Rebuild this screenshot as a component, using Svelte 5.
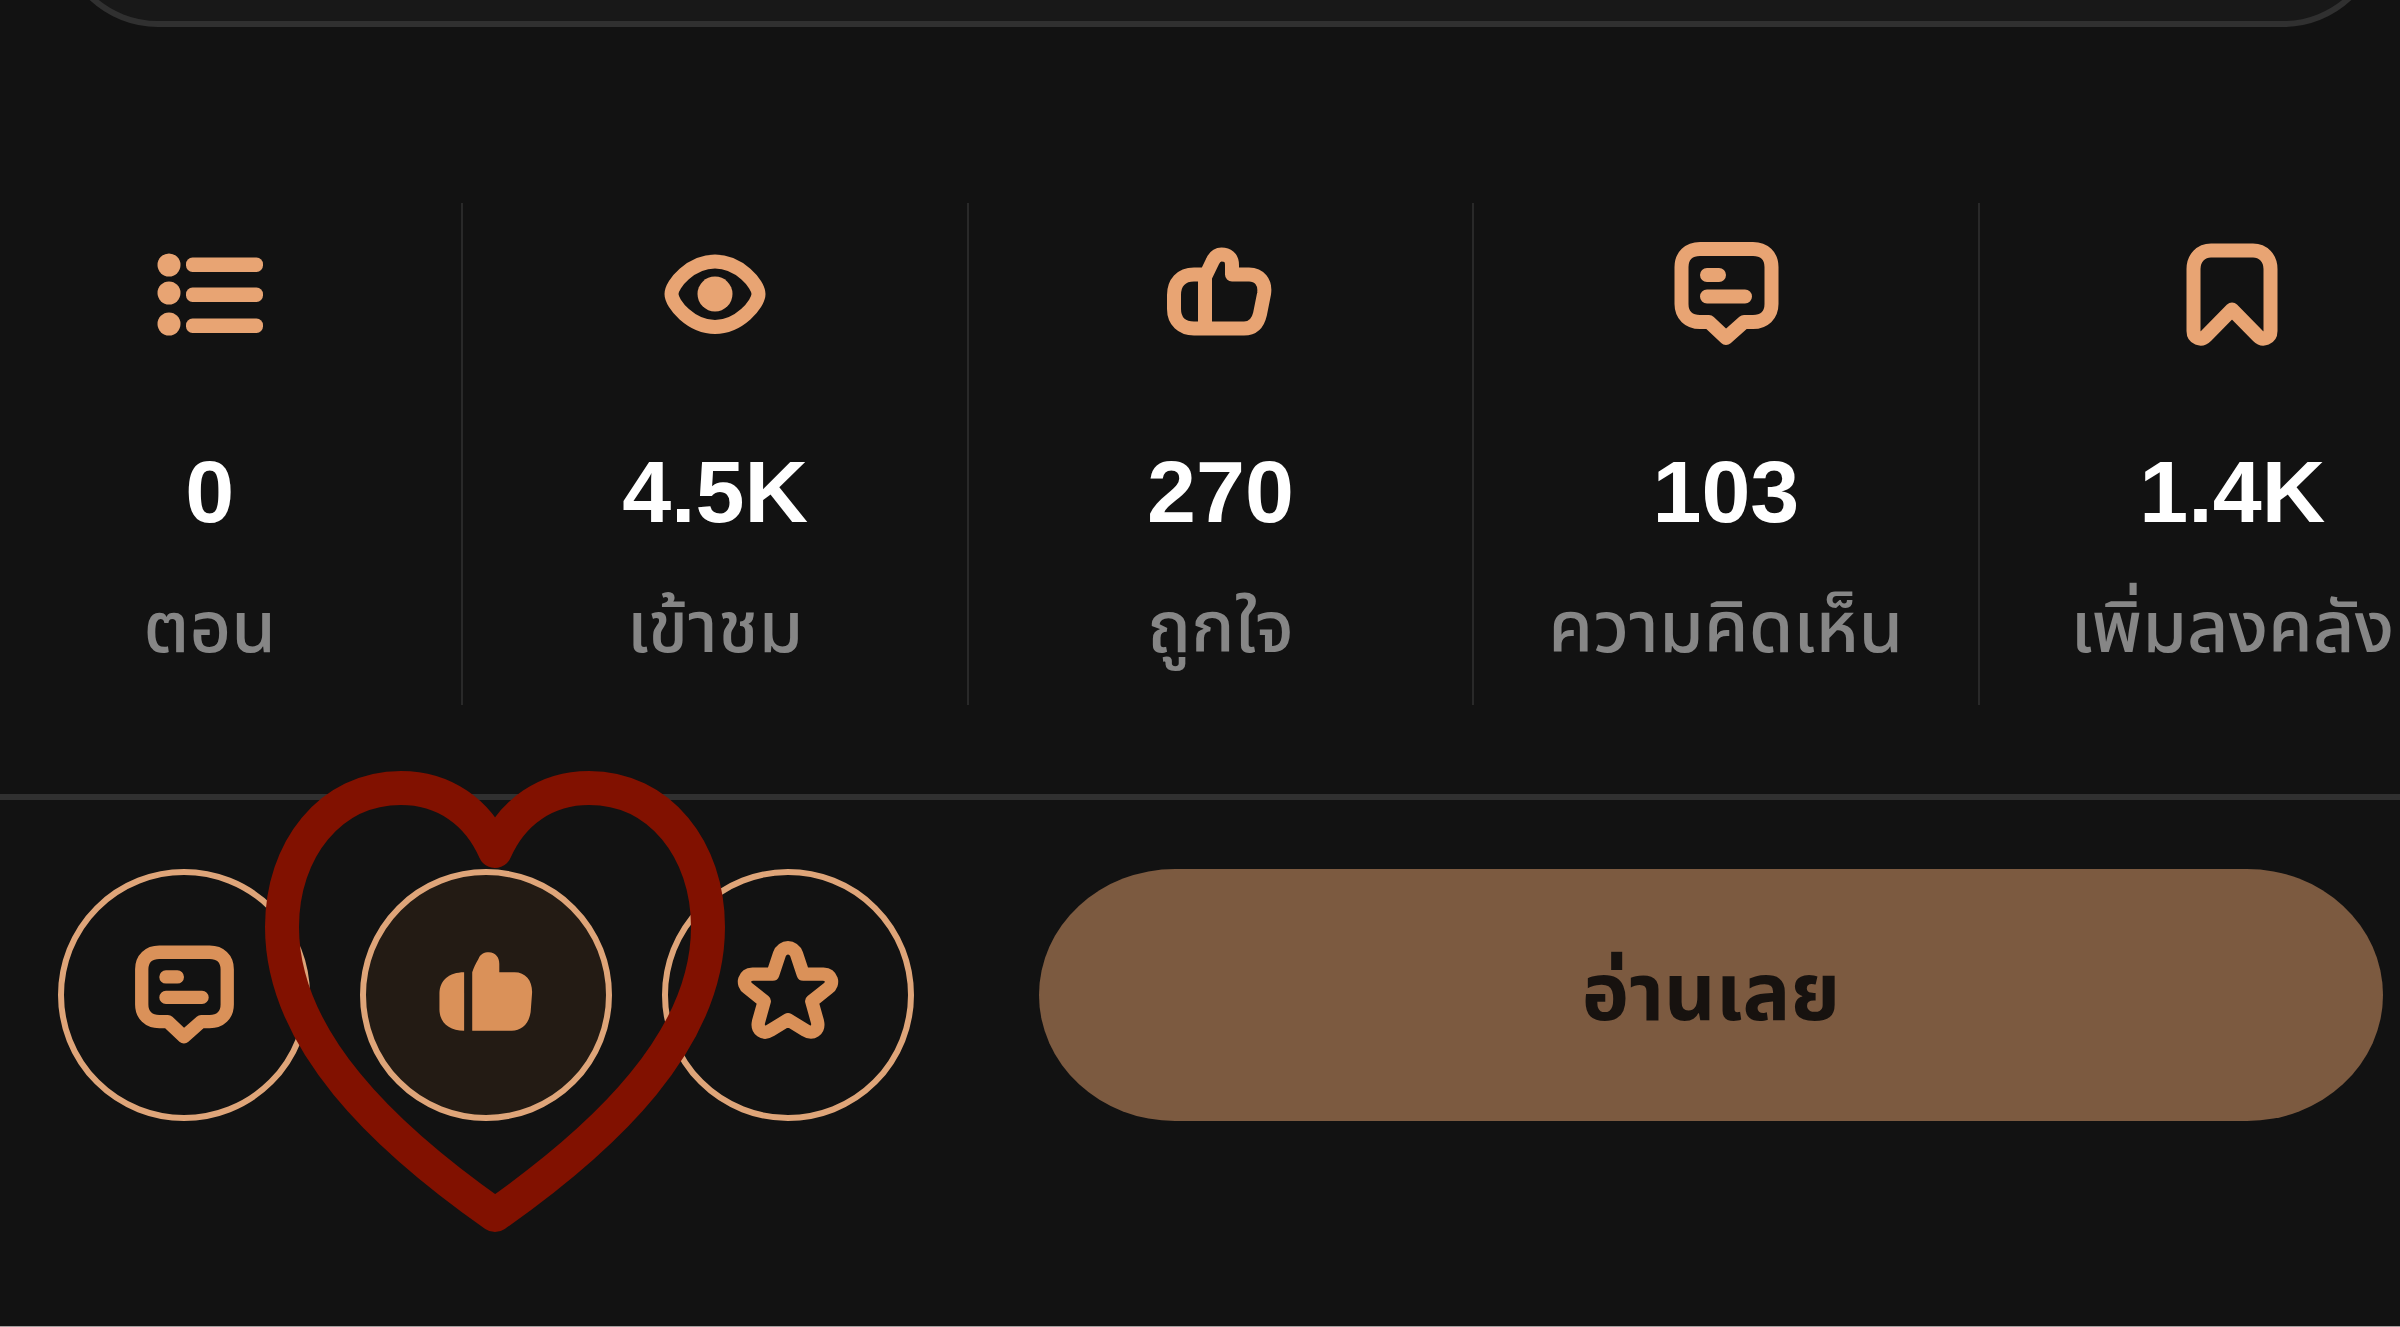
<script lang="ts">
  type IconName = 'list' | 'eye' | 'like' | 'comment' | 'bookmark' | 'likeFilled' | 'star'

  interface Stat {
    icon: IconName
    value: string
    label: string
  }

  const stats: Stat[] = [
    { icon: 'list', value: '0', label: 'ตอน' },
    { icon: 'eye', value: '4.5K', label: 'เข้าชม' },
    { icon: 'like', value: '270', label: 'ถูกใจ' },
    { icon: 'comment', value: '103', label: 'ความคิดเห็น' },
    { icon: 'bookmark', value: '1.4K', label: 'เพิ่มลงคลัง' },
  ]

  let liked = $state(true)
</script>

{#snippet icon(name: IconName)}
  <svg class="icon" viewBox="0 0 120 120" aria-hidden="true">
    {#if name === 'list'}
      <g class="solid">
        <circle cx="19" cy="31" r="11.5" />
        <circle cx="19" cy="59" r="11.5" />
        <circle cx="19" cy="90" r="11.5" />
        <rect x="36" y="23.5" width="77" height="14.5" rx="6.5" />
        <rect x="36" y="53.5" width="77" height="14.5" rx="6.5" />
        <rect x="36" y="84.5" width="77" height="14.5" rx="6.5" />
      </g>
    {:else if name === 'eye'}
      <path d="M16.5 60C16.5 50 36 27.5 60 27.5S103.5 50 103.5 60S84 93 60 93S16.5 70 16.5 60Z" />
      <circle class="solid" cx="60" cy="60" r="17.5" />
    {:else if name === 'like'}
      <path d="M45 40.5H34C21 40.5 14 49 14 61V75C14 87 22 94.5 34 94.5H84C93 94.5 98 89 100 80L104 60C106 48 99 40.5 89 40.5H72V31C72 23 67 20.5 61.5 20.5C57 20.5 54.5 23 52.5 27.5L45 43V94.5" />
    {:else if name === 'comment'}
      <path d="M34 15H87C98 15 105.5 22 105.5 33V70C105.5 81 98 88 87 88H78L60 104L43 88H34C23 88 15.5 81 15.5 70V33C15.5 22 23 15 34 15Z" />
      <path d="M41 41H53M41 62.5H79" />
    {:else if name === 'bookmark'}
      <path d="M21.5 97V35C21.5 24 29 16.5 39 16.5H81C91 16.5 98.5 24 98.5 35V97C98.5 104 91 107 86 102L60 75.5L34 102C29 107 21.5 104 21.5 97Z" />
    {:else if name === 'likeFilled'}
      <g class="solid">
        <path d="M37 36V97.5C21 97.5 11 89 11 75V58C11 45 21 36 37 36Z" />
        <path d="M45.5 97.5V36C47 31 49 27 52 22C54 17 58 15 63 15C70 15.5 74 20 74 27V36H90C102 36 109 45 108.5 58L107 78C105 91 97 97.5 87 97.5Z" />
      </g>
    {:else}
      <path d="M51 17C54 8 66 8 69 17L76 38L97 38C106 38.5 109 48 102 53L85 66.5L91 88C93 97 86 102 78 97L60 86L42 97C34 102 27 97 29 88L35 66.5L18 53C11 48 14 38.5 23 38L44 38Z" />
    {/if}
  </svg>
{/snippet}

<main class="page">
  <div class="card"></div>

  <ul class="stats">
    {#each stats as stat (stat.label)}
      <li>
        {@render icon(stat.icon)}
        <strong>{stat.value}</strong>
        <span>{stat.label}</span>
      </li>
    {/each}
  </ul>

  <footer class="actions">
    <button class="round" aria-label="ความคิดเห็น">{@render icon('comment')}</button>
    <div class="marked">
      <button
        class="round"
        class:round--active={liked}
        aria-label="ถูกใจ"
        aria-pressed={liked}
        onclick={() => (liked = !liked)}
      >
        {@render icon(liked ? 'likeFilled' : 'like')}
      </button>
      <svg class="heart" viewBox="264 770 462 464" aria-hidden="true">
        <path d="M495 851C478 812 444 788 401 788C330 788 282 850 282 927C282 1040 384 1137 495 1215C606 1137 708 1040 708 927C708 850 660 788 589 788C546 788 512 812 495 851Z" />
      </svg>
    </div>
    <button class="round" aria-label="เพิ่มลงคลัง">{@render icon('star')}</button>
    <button class="read">อ่านเลย</button>
  </footer>
</main>

<style>
  :global(body) {
    margin: 0;
    background: #121212;
  }

  .page {
    box-sizing: border-box;
    min-height: 100vh;
    overflow: hidden;
    border-bottom: 1px solid #a39d9d;
    background: #121212;
    color: #fff;
    font-family: 'Liberation Sans', 'Noto Sans Thai', 'Noto Sans', sans-serif;
  }

  /* only the lower edge of the card shows above the stats */
  .card {
    box-sizing: border-box;
    height: 240px;
    margin: -213px 17px 176px 58px;
    border: 6px solid #303030;
    border-radius: 100px;
    background: #181818;
  }

  /* the strip runs a little past both sides of the screen */
  .stats {
    display: grid;
    grid-template-columns: repeat(5, 1fr);
    margin: 0 -85px 89px -42px;
    padding: 0;
    list-style: none;
  }

  .stats li {
    display: flex;
    flex-direction: column;
    align-items: center;
    box-sizing: border-box;
    height: 502px;
    padding-top: 31px;
    border-right: 2px solid #292929;
    color: #e8a473;
  }

  .stats li:last-child {
    border-right: none;
  }

  .stats strong {
    margin-top: 88px;
    color: #fff;
    font-size: 88px;
    line-height: 100px;
  }

  .stats span {
    margin-top: 35px;
    color: #868686;
    font-size: 72px;
    font-weight: 500;
    line-height: 100px;
    white-space: nowrap;
  }

  .icon {
    display: block;
    width: 120px;
    height: 120px;
    fill: none;
    stroke: currentColor;
    stroke-width: 14;
    stroke-linecap: round;
    stroke-linejoin: round;
  }

  .icon .solid {
    fill: currentColor;
    stroke: none;
  }

  .actions {
    display: flex;
    align-items: center;
    gap: 50px;
    padding: 69px 17px 0 58px;
    border-top: 6px solid #303030;
  }

  button {
    padding: 0;
    font-family: inherit;
    cursor: pointer;
  }

  .round {
    display: flex;
    flex: none;
    align-items: center;
    justify-content: center;
    box-sizing: border-box;
    width: 252px;
    height: 252px;
    border: 6px solid #dfa579;
    border-radius: 50%;
    background: none;
    color: #da9159;
  }

  .round .icon {
    width: 114px;
    height: 114px;
  }

  .round--active {
    background: #231b14;
  }

  .marked {
    position: relative;
    z-index: 1;
    flex: none;
  }

  .heart {
    position: absolute;
    top: -99px;
    left: -96px;
    width: 462px;
    height: 464px;
    fill: none;
    stroke: #811100;
    stroke-width: 34;
    stroke-linejoin: round;
    pointer-events: none;
  }

  .read {
    flex: 1;
    height: 252px;
    margin-left: 75px;
    border: none;
    border-radius: 136px / 126px;
    background: #7c5a40;
    color: #17120f;
    font-size: 80px;
    font-weight: 700;
  }
</style>
